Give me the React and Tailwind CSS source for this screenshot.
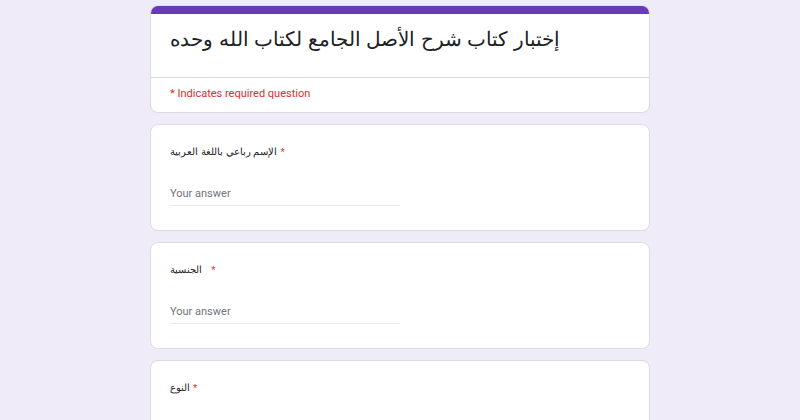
export default function App() {
  const questions = [
    { label: "الإسم رباعي باللغة العربية", gap: " " },
    { label: "الجنسية", gap: "   " },
  ];
  const arabic = { fontFamily: "'Liberation Sans', Arial, sans-serif" };

  return (
    <div className="min-h-screen bg-[#f0ebf8] pt-[5px] pb-10" style={{ fontFamily: "Roboto, 'Liberation Sans', sans-serif" }}>
      <div className="mx-auto flex w-[500px] flex-col gap-[11px]">
        {/* header card */}
        <div className="overflow-hidden rounded-[8px] border border-[#dadce0] bg-white">
          <div className="h-[8px] bg-[#673ab7]" />
          <div className="px-[19px] pt-[9px] pb-[22px]">
            <h1 className="flex whitespace-nowrap text-[20px] leading-[32px] text-[#202124]" style={arabic}>
              <span dir="rtl">إختبار كتاب شرح الأصل الجامع لكتاب الله وحده</span>
            </h1>
          </div>
          <div className="border-t border-[#dadce0] px-[19px] pt-[8px] pb-[10px] text-[11px] leading-[16px] text-[#d93025]">
            * Indicates required question
          </div>
        </div>

        {questions.map((q, i) => (
          <div key={i} className="rounded-[8px] border border-[#dadce0] bg-white px-[19px] pt-[19px] pb-[24px]">
            <div className="flex items-center text-[10px] leading-[16px] text-[#202124]" style={arabic}>
              <span dir="rtl">{q.label}</span>
              <span className="whitespace-pre text-[11px] text-[#d93025]">{q.gap + "*"}</span>
            </div>
            <div className="mt-[26px] w-[230px] border-b border-[#e8e8ea] pb-[3px] text-[11px] leading-[16px] text-[#70757a]">
              Your answer
            </div>
          </div>
        ))}

        <div className="rounded-[8px] border border-[#dadce0] bg-white px-[19px] pt-[19px] pb-[24px]">
          <div className="flex items-center text-[10px] leading-[16px] text-[#202124]" style={arabic}>
            <span dir="rtl">النوع</span>
            <span className="whitespace-pre text-[11px] text-[#d93025]">{" *"}</span>
          </div>
          <div className="mt-[18px] h-[60px]" />
        </div>
      </div>
    </div>
  );
}
